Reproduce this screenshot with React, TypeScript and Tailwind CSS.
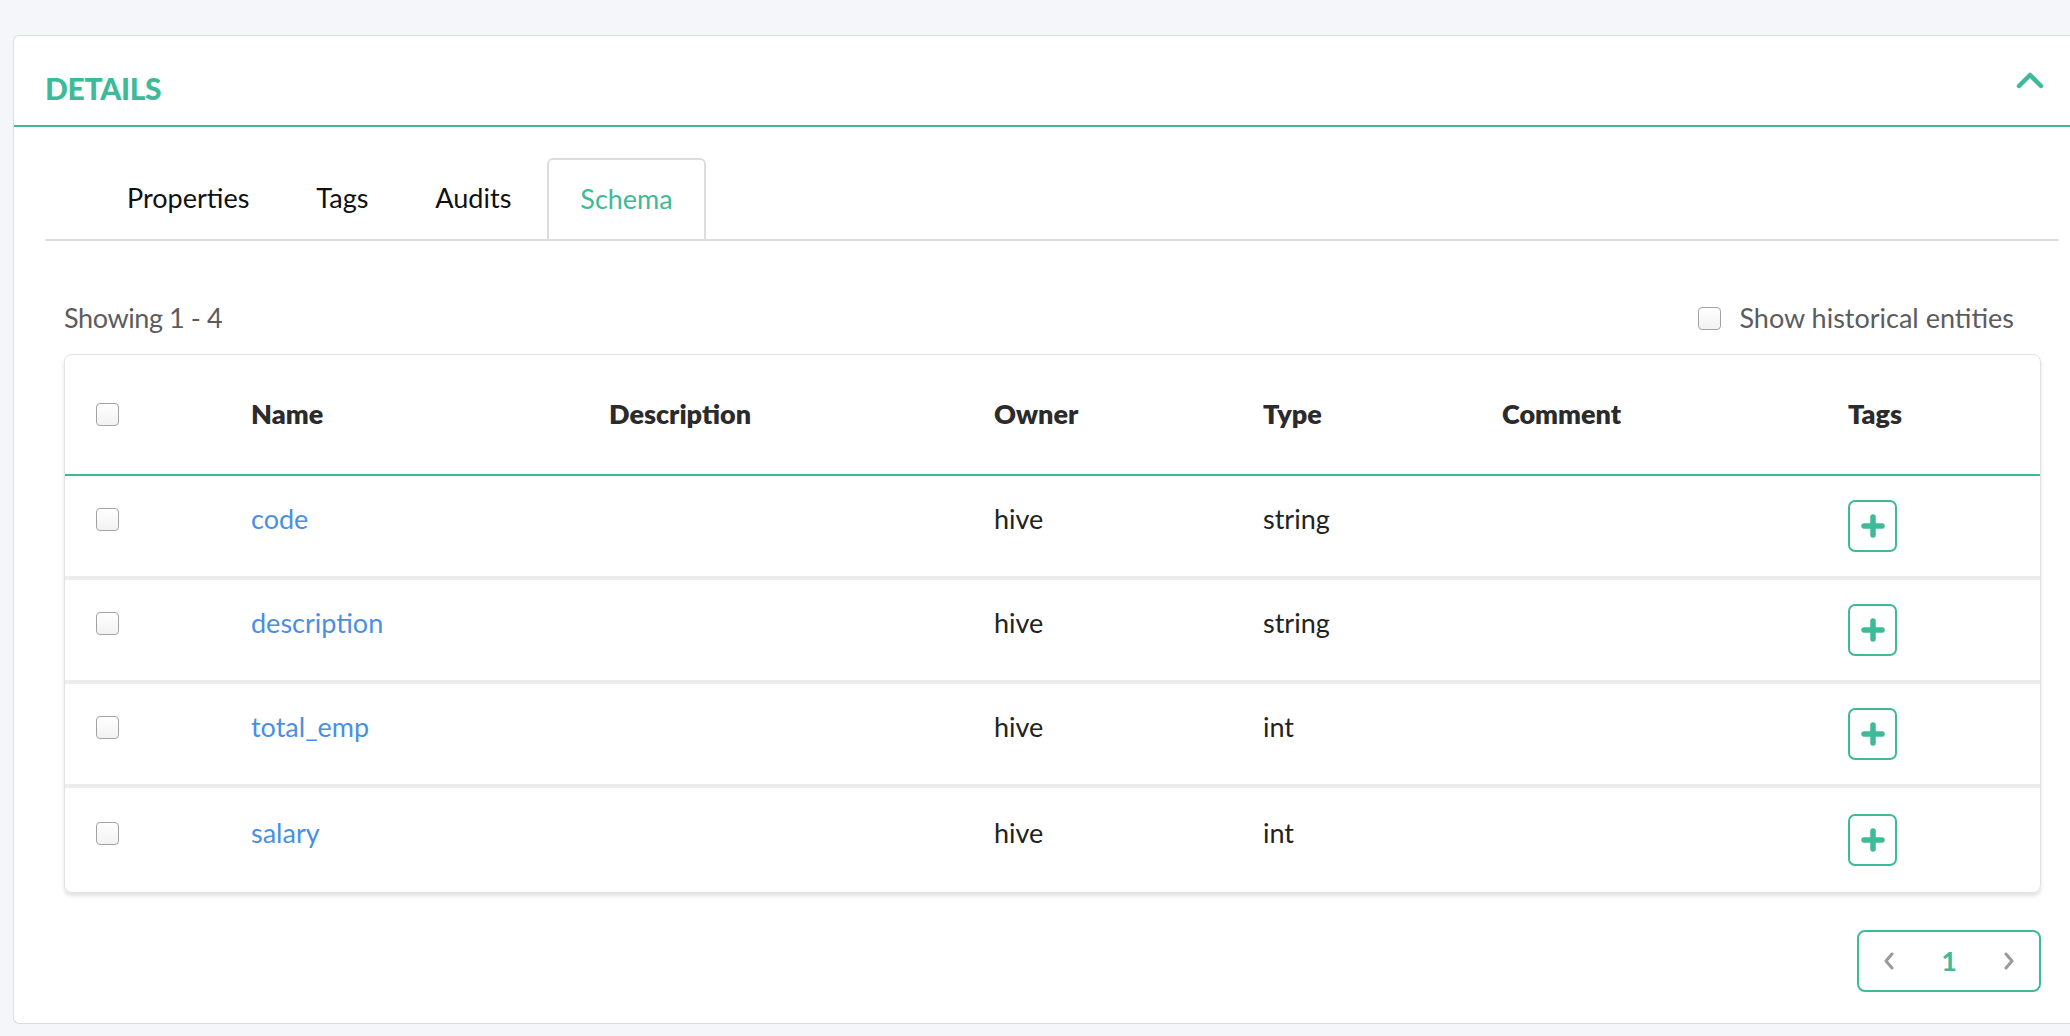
const teal = "#3dba98";

const rows = [
  { name: "code", owner: "hive", type: "string" },
  { name: "description", owner: "hive", type: "string" },
  { name: "total_emp", owner: "hive", type: "int" },
  { name: "salary", owner: "hive", type: "int" },
];

const cols = "grid grid-cols-[155px_358px_385px_269px_239px_346px_1fr] pl-[31px]";

const Check = () => (
  <span className="block w-[23px] h-[23px] rounded-[4px] border border-[#a3a3a3] bg-gradient-to-b from-white to-[#f2f2f2]" />
);

const Tabs = () => {
  const tabs = ["Properties", "Tags", "Audits", "Schema"];
  return (
    <div className="ml-[31px] mr-[11px] mt-[31px] border-b-2 border-[#dddddd] flex gap-[5px] pl-[51px]">
      {tabs.map((t) =>
        t === "Schema" ? (
          <div
            key={t}
            className="h-[81px] px-[31px] -mb-[2px] flex items-center bg-white border-2 border-b-0 border-[#dddddd] rounded-t-[6px] text-[#3dba98]"
          >
            {t}
          </div>
        ) : (
          <div key={t} className="h-[81px] px-[31px] flex items-center text-[#111]">
            {t}
          </div>
        )
      )}
    </div>
  );
};

const PlusIcon = () => (
  <svg width="24" height="24" viewBox="0 0 24 24">
    <path d="M12 3v18M3 12h18" stroke={teal} strokeWidth="5.5" strokeLinecap="round" fill="none" />
  </svg>
);

export default function App() {
  return (
    <div
      className="min-h-screen bg-[#f5f6fa] pt-[35px] pl-[13px] overflow-hidden text-[27px]"
      style={{ fontFamily: "Lato, 'Open Sans', sans-serif" }}
    >
      <div className="bg-white border border-r-0 border-[#dcdcdc] rounded-l-[6px] pb-[31px]">
        {/* header */}
        <div className="h-[91px] border-b-2 border-[#3dba98] flex items-center justify-between pl-[31px] pr-[26px]">
          <span className="mt-[16px] text-[30px] font-black tracking-[-0.3px] text-[#3dba98]">DETAILS</span>
          <svg width="28" height="18" viewBox="0 0 28 18" className="-mt-[2px]">
            <polyline
              points="3,15 14,4 25,15"
              fill="none"
              stroke={teal}
              strokeWidth="4.5"
              strokeLinecap="round"
              strokeLinejoin="round"
            />
          </svg>
        </div>

        <Tabs />

        <div className="pl-[50px] pr-[29px]">
          <div className="flex items-center justify-between mt-[57px] h-[40px] pr-[27px]">
            <span className="text-[#5c5c5c] tracking-[-0.4px]">Showing 1 - 4</span>
            <label className="flex items-center gap-[18px] text-[#5c5c5c]">
              <Check />
              Show historical entities
            </label>
          </div>

          {/* table */}
          <div className="mt-[16px] border border-[#e2e2e2] rounded-[8px] shadow-[0_3px_4px_rgba(0,0,0,0.12)]">
            <div className={`${cols} h-[121px] items-center border-b-2 border-[#3dba98] font-extrabold text-[#2b2b2b]`}>
              <Check />
              <span>Name</span>
              <span>Description</span>
              <span>Owner</span>
              <span>Type</span>
              <span>Comment</span>
              <span>Tags</span>
            </div>
            {rows.map((r, i) => (
              <div
                key={r.name}
                className={`${cols} h-[104px] items-center ${i < rows.length - 1 ? "border-b-4 border-[#ededed]" : ""}`}
              >
                <div className="mb-[14px]">
                  <Check />
                </div>
                <span className="mb-[14px] text-[#4a90e2]">{r.name}</span>
                <span />
                <span className="mb-[14px] text-[#222]">{r.owner}</span>
                <span className="mb-[14px] text-[#222]">{r.type}</span>
                <span />
                <div>
                  <button className="w-[49px] h-[52px] border-2 border-[#3dba98] rounded-[7px] flex items-center justify-center bg-white">
                    <PlusIcon />
                  </button>
                </div>
              </div>
            ))}
          </div>

          <div className="flex justify-end mt-[37px]">
            <div className="w-[184px] h-[62px] border-2 border-[#3dba98] rounded-[8px] flex items-center justify-between px-[24px]">
              <svg width="12" height="18" viewBox="0 0 12 18">
                <polyline points="9,2 3,9 9,16" fill="none" stroke="#9a9a9a" strokeWidth="3" strokeLinecap="round" strokeLinejoin="round" />
              </svg>
              <span className="font-bold text-[#3dba98] text-[27px]">1</span>
              <svg width="12" height="18" viewBox="0 0 12 18">
                <polyline points="3,2 9,9 3,16" fill="none" stroke="#9a9a9a" strokeWidth="3" strokeLinecap="round" strokeLinejoin="round" />
              </svg>
            </div>
          </div>
        </div>
      </div>
    </div>
  );
}
